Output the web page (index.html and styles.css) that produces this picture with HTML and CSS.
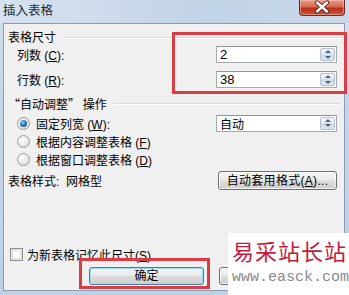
FILE: index.html
```html
<!DOCTYPE html>
<html lang="zh-CN">
<head>
<meta charset="utf-8">
<title>插入表格</title>
<link rel="stylesheet" href="styles.css">
</head>
<body>
<div class="window">
  <div class="titlebar">
    <span class="title">插入表格</span>
    <div class="close">
      <svg width="46" height="16" viewBox="0 0 46 16">
        <path d="M18 3.5 L28 12.5 M28 3.5 L18 12.5" stroke="#5a1c14" stroke-width="4.2" stroke-linecap="round"/>
        <path d="M18 3.5 L28 12.5 M28 3.5 L18 12.5" stroke="#ffffff" stroke-width="2.4" stroke-linecap="round"/>
      </svg>
    </div>
  </div>
  <div class="client">
    <div class="group-head"><span>表格尺寸</span><i class="rule"></i></div>
    <div class="row">
      <span class="label">列数 (<u>C</u>):</span>
      <div class="spin"><span class="val">2</span><span class="spinbtn"><b class="up"></b><b class="down"></b></span></div>
    </div>
    <div class="row row-gap">
      <span class="label">行数 (<u>R</u>):</span>
      <div class="spin"><span class="val">38</span><span class="spinbtn"><b class="up"></b><b class="down"></b></span></div>
    </div>
    <div class="group-head head2"><span class="cjk-q">“自动调整” 操作</span><i class="rule"></i></div>
    <div class="radio-row first">
      <span class="opt"><i class="radio on"></i><span>固定列宽 (<u>W</u>):</span></span>
      <div class="spin"><span class="val cjk">自动</span><span class="spinbtn"><b class="up"></b><b class="down"></b></span></div>
    </div>
    <div class="radio-row">
      <span class="opt"><i class="radio"></i><span>根据内容调整表格 (<u>F</u>)</span></span>
    </div>
    <div class="radio-row">
      <span class="opt"><i class="radio"></i><span>根据窗口调整表格 (<u>D</u>)</span></span>
    </div>
    <div class="style-row">
      <span>表格样式:&nbsp; 网格型</span>
      <span class="btn btn-auto">自动套用格式(<u>A</u>)...</span>
    </div>
    <div class="check-row">
      <i class="checkbox"></i><span>为新表格记忆此尺寸(<u>S</u>)</span>
    </div>
    <div class="btn-row">
      <span class="btn btn-ok">确定</span>
      <span class="btn btn-cancel"></span>
    </div>
  </div>
  <div class="hl hl-size"></div>
  <div class="hl hl-ok"></div>
  <div class="watermark">
    <div class="wm-cn">易采站长站</div>
    <div class="wm-url">www.easck.com</div>
  </div>
</div>
</body>
</html>
```
FILE: styles.css
```css
* { box-sizing: border-box; }
html, body { margin: 0; padding: 0; }
body { width: 349px; height: 295px; overflow: hidden; background: #c9d8e8; }

.window {
  position: relative;
  width: 349px;
  height: 295px;
  background: linear-gradient(180deg, #d3e0ee 0%, #c6d6e8 30%, #bdd0e5 100%);
  font-family: "Liberation Sans", "Noto Sans CJK SC", sans-serif;
  font-size: 12px;
  color: #000;
  overflow: hidden;
}

.titlebar {
  height: 23px;
  display: flex;
  align-items: flex-start;
  justify-content: space-between;
  background: linear-gradient(90deg, #d6e2ef 0%, #c9d8ea 40%, #c1d3e7 60%, #cbd9ea 100%);
}
.title {
  padding: 2px 0 0 3px;
  font-size: 12.5px;
  line-height: 18px;
  color: #1b2838;
}
.close {
  width: 46px;
  height: 16px;
  margin-right: 4px;
  border: 1px solid #6c2a22;
  border-top: none;
  border-radius: 0 0 4px 4px;
  background: linear-gradient(180deg, #e89a88 0%, #d66a54 45%, #b8301c 55%, #cc5438 100%);
  box-shadow: inset 0 0 0 1px rgba(255, 210, 200, 0.45);
}
.close svg { display: block; margin: -1px 0 0 -1px; }

.client {
  width: 342px;
  height: 268px;
  margin-left: 3px;
  border: 1px solid #8b9bb0;
  background: #f0f0f0;
  padding: 6px 7px 5px 4px;
  display: flex;
  flex-direction: column;
}

.group-head {
  height: 16px;
  display: flex;
  align-items: center;
  gap: 6px;
  line-height: 16px;
}
.group-head .rule {
  flex: 1;
  height: 2px;
  border-top: 1px solid #d5dfe5;
  border-bottom: 1px solid #ffffff;
  margin-right: -4px;
}
.cjk-q { font-family: "Noto Sans CJK SC", sans-serif; }
.head2 { margin-top: 8px; }

.row {
  height: 17px;
  display: flex;
  align-items: center;
  justify-content: space-between;
}
.row-gap { margin-top: 8px; }
.label { padding-left: 9px; }

.spin {
  width: 121px;
  height: 17px;
  border: 1px solid #a5a9b0;
  border-top-color: #8e949c;
  background: #fff;
  display: flex;
  align-items: center;
  justify-content: space-between;
  padding: 1px;
}
.val {
  padding-left: 2px;
  font-family: "Liberation Sans", sans-serif;
  font-size: 13px;
  line-height: 13px;
}
.val.cjk { font-family: "Noto Sans CJK SC", sans-serif; font-size: 12px; }
.spinbtn {
  width: 15px;
  height: 13px;
  display: flex;
  flex-direction: column;
  border: 1px solid #b4c0d0;
  border-radius: 2px;
  background: linear-gradient(180deg, #f3f6fa 0%, #e0e7f0 48%, #cdd8e6 52%, #dfe6ef 100%);
}
.spinbtn b {
  flex: 1;
  display: flex;
  align-items: center;
  justify-content: center;
}
.spinbtn .up::before {
  content: "";
  border-left: 3px solid transparent;
  border-right: 3px solid transparent;
  border-bottom: 3px solid #4e6283;
}
.spinbtn .down::before {
  content: "";
  border-left: 3px solid transparent;
  border-right: 3px solid transparent;
  border-top: 3px solid #4e6283;
}

.radio-row {
  height: 18px;
  display: flex;
  align-items: center;
  justify-content: space-between;
}
.radio-row.first { margin-top: 2px; }
.opt {
  display: flex;
  align-items: center;
  gap: 6px;
  padding-left: 9px;
}
.radio {
  width: 13px;
  height: 13px;
  border-radius: 50%;
  border: 1px solid #9a9c9e;
  background: radial-gradient(circle at 40% 35%, #ffffff 0%, #e6e6e6 60%, #cfcfcf 100%);
  display: flex;
  align-items: center;
  justify-content: center;
}
.radio.on::after {
  content: "";
  width: 7px;
  height: 7px;
  border-radius: 50%;
  background: radial-gradient(circle at 40% 35%, #8fd0f3 0%, #2c7cb8 45%, #163d66 100%);
}

.style-row {
  height: 19px;
  margin-top: 3px;
  display: flex;
  align-items: center;
  justify-content: space-between;
}

.btn {
  display: flex;
  align-items: center;
  justify-content: center;
  height: 19px;
  border: 1px solid #707070;
  border-radius: 3px;
  background: linear-gradient(180deg, #f4f4f4 0%, #ebebeb 48%, #dcdcdc 52%, #cfcfcf 100%);
  box-shadow: inset 0 0 0 1px rgba(255, 255, 255, 0.7);
  line-height: 16px;
}
.btn-auto { width: 119px; letter-spacing: 0.3px; }

.check-row {
  height: 16px;
  margin-top: 56px;
  display: flex;
  align-items: center;
  gap: 4px;
  padding-left: 2px;
}
.checkbox {
  width: 13px;
  height: 13px;
  border: 1px solid #8e8f8f;
  background: #fff;
  box-shadow: inset 0 0 0 2px #e4e4e4;
}

.btn-row {
  height: 18px;
  margin-top: 5px;
  display: flex;
  gap: 15px;
  padding-left: 81px;
}
.btn-row .btn { width: 115px; height: 18px; }
.btn-ok {
  border-color: #3c7fb1;
  box-shadow: inset 0 0 0 1px #9fdcf5;
}

.hl {
  position: absolute;
  border: 3px solid #dc3d45;
}
.hl-size { left: 172px; top: 32px; width: 175px; height: 62px; }
.hl-ok { left: 79px; top: 258px; width: 131px; height: 31px; }

.watermark {
  position: absolute;
  left: 228px;
  top: 233px;
  width: 121px;
  height: 62px;
  background: #fff;
  padding: 5px 0 0 4px;
}
.wm-cn {
  font-family: "Noto Sans CJK SC", serif;
  font-size: 22px;
  line-height: 24px;
  color: #c41a3c;
  letter-spacing: 1px;
  white-space: nowrap;
}
.wm-url {
  margin-top: 8px;
  font-family: "Liberation Mono", monospace;
  font-size: 15px;
  line-height: 16px;
  color: #8a8a8a;
  white-space: nowrap;
}
```
